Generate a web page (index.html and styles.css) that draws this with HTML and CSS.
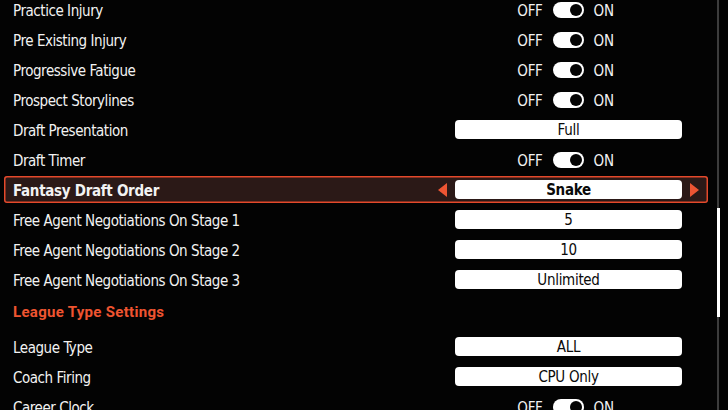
FILE: index.html
```html
<!DOCTYPE html>
<html lang="en">
<head>
    <meta charset="UTF-8">
    <title>Franchise Settings</title>
    <link rel="stylesheet" href="styles.css">
</head>
<body>

    <div class="settings">
        <div class="row">
            <span class="label">Practice Injury</span>
            <div class="control">
                <div class="toggle"><span>OFF</span><i class="switch"></i><span>ON</span></div>
            </div>
        </div>
        <div class="row">
            <span class="label">Pre Existing Injury</span>
            <div class="control">
                <div class="toggle"><span>OFF</span><i class="switch"></i><span>ON</span></div>
            </div>
        </div>
        <div class="row">
            <span class="label">Progressive Fatigue</span>
            <div class="control">
                <div class="toggle"><span>OFF</span><i class="switch"></i><span>ON</span></div>
            </div>
        </div>
        <div class="row">
            <span class="label">Prospect Storylines</span>
            <div class="control">
                <div class="toggle"><span>OFF</span><i class="switch"></i><span>ON</span></div>
            </div>
        </div>
        <div class="row">
            <span class="label">Draft Presentation</span>
            <div class="control">
                <div class="value">Full</div>
            </div>
        </div>
        <div class="row">
            <span class="label">Draft Timer</span>
            <div class="control">
                <div class="toggle"><span>OFF</span><i class="switch"></i><span>ON</span></div>
            </div>
        </div>
        <div class="row selected">
            <span class="label">Fantasy Draft Order</span>
            <div class="control">
                <span class="arrow left"></span>
                <div class="value">Snake</div>
                <span class="arrow right"></span>
            </div>
        </div>
        <div class="row">
            <span class="label">Free Agent Negotiations On Stage 1</span>
            <div class="control">
                <div class="value">5</div>
            </div>
        </div>
        <div class="row">
            <span class="label">Free Agent Negotiations On Stage 2</span>
            <div class="control">
                <div class="value">10</div>
            </div>
        </div>
        <div class="row">
            <span class="label">Free Agent Negotiations On Stage 3</span>
            <div class="control">
                <div class="value">Unlimited</div>
            </div>
        </div>

        <h3 class="section">League Type Settings</h3>

        <div class="row">
            <span class="label">League Type</span>
            <div class="control">
                <div class="value">ALL</div>
            </div>
        </div>
        <div class="row">
            <span class="label">Coach Firing</span>
            <div class="control">
                <div class="value">CPU Only</div>
            </div>
        </div>
        <div class="row">
            <span class="label">Career Clock</span>
            <div class="control">
                <div class="toggle"><span>OFF</span><i class="switch"></i><span>ON</span></div>
            </div>
        </div>
    </div>

    <div class="scrollbar"><span class="thumb"></span></div>

</body>
</html>
```

FILE: styles.css
```css
/* Page */
body {
    margin: 0;
    width: 728px;
    height: 410px;
    overflow: hidden;
    background: #030303;
    color: #f2f2f2;
    font-family: "DejaVu Sans Condensed", "Liberation Sans Narrow", Roboto, sans-serif;
    position: relative;
}

h3 {
    margin: 0;
}

/* Settings list */
.settings {
    width: 704px;
    margin: -4px 0 0 4px;
}

.row {
    display: flex;
    align-items: center;
    justify-content: space-between;
    height: 27px;
    margin-bottom: 3px;
    padding: 0 9px;
    box-sizing: border-box;
    border-radius: 3px;
}

.label {
    margin-top: 2px;
    font-size: 15px;
    letter-spacing: -0.45px;
}

.row.selected {
    background: #2b1917;
    box-shadow: inset 0 0 0 1.5px #e4492b;
}

.row.selected .label {
    font-weight: bold;
    letter-spacing: -0.3px;
}

/* Right-hand controls */
.control {
    display: flex;
    align-items: center;
    justify-content: center;
    width: 261px;
    padding: 0 17px;
    box-sizing: border-box;
    position: relative;
}

.value {
    width: 227px;
    height: 19px;
    line-height: 21px;
    overflow: hidden;
    background: #ffffff;
    color: #0a0a0a;
    border-radius: 4px;
    text-align: center;
    font-size: 15px;
    letter-spacing: -0.3px;
}

.selected .value {
    font-weight: bold;
}

.arrow {
    position: absolute;
    top: 50%;
    width: 0;
    height: 0;
    border-top: 7px solid transparent;
    border-bottom: 7px solid transparent;
    transform: translateY(-50%);
}

.arrow.left {
    left: 0;
    border-right: 9px solid #ee5533;
}

.arrow.right {
    right: 0;
    border-left: 9px solid #ee5533;
}

/* OFF / ON toggle */
.toggle {
    display: flex;
    align-items: center;
    gap: 10px;
    font-size: 15px;
    letter-spacing: -0.3px;
    margin-left: -6px;
}

.toggle span {
    margin-top: 2px;
}

.switch {
    display: block;
    width: 31px;
    height: 16px;
    background: #ffffff;
    border-radius: 8px;
    position: relative;
}

.switch::after {
    content: "";
    position: absolute;
    right: 2px;
    top: 2px;
    width: 12px;
    height: 12px;
    border-radius: 50%;
    background: #050505;
}

/* Section header */
.section {
    height: 34px;
    line-height: 32px;
    margin-bottom: 3px;
    padding-left: 9px;
    font-family: Roboto, sans-serif;
    font-size: 15px;
    font-weight: bold;
    color: #ef5430;
    letter-spacing: 0.3px;
}

/* Scrollbar overlay */
.scrollbar {
    position: absolute;
    top: 0;
    left: 717px;
    width: 2px;
    height: 410px;
    background: #3c3c3c;
}

.thumb {
    position: absolute;
    top: 208px;
    left: -0.5px;
    width: 3px;
    height: 109px;
    background: #ffffff;
}
```
